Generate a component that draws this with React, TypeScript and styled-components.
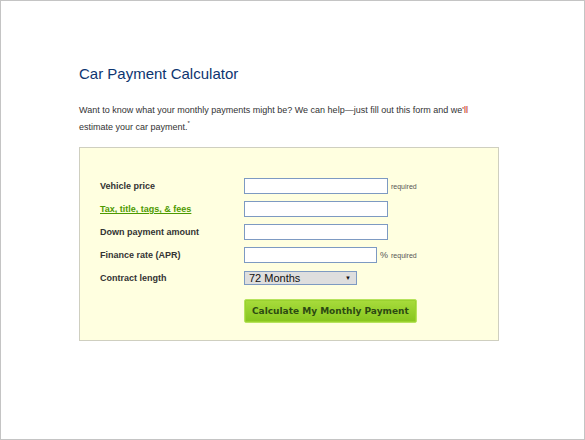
import * as React from 'react';
import styled, { createGlobalStyle } from 'styled-components';

const GlobalStyle = createGlobalStyle`
  html, body {
    margin: 0;
    padding: 0;
    background: #ffffff;
  }
  body {
    font-family: 'Liberation Sans', Arial, sans-serif;
  }
`;

const Frame = styled.div`
  box-sizing: border-box;
  width: 585px;
  height: 440px;
  border: 1px solid #c4c4c4;
  padding: 64px 86px 0 78px;
`;

const Title = styled.h1`
  margin: 0;
  font-size: 15px;
  font-weight: normal;
  color: #0d3570;
  line-height: 18px;
`;

const Intro = styled.p`
  margin: 19px 0 0;
  font-size: 9px;
  line-height: 17px;
  color: #333;
`;

const Red = styled.span`
  color: #c00000;
`;

const Sup = styled.sup`
  font-size: 6px;
  vertical-align: 5px;
  line-height: 0;
`;

const Panel = styled.div`
  margin-top: 11px;
  width: 420px;
  box-sizing: border-box;
  background: #ffffe0;
  border: 1px solid #cfcfc0;
  padding: 30px 20px 17px 20px;
`;

const Grid = styled.div`
  display: grid;
  grid-template-columns: 144px 1fr;
  row-gap: 7px;
  align-items: center;
`;

const Label = styled.label`
  font-size: 9px;
  font-weight: bold;
  color: #333;
`;

const LinkLabel = styled.a`
  font-size: 9px;
  font-weight: bold;
  color: #4d9a00;
  text-decoration: underline;
`;

const Field = styled.div`
  display: flex;
  align-items: center;
  gap: 2px;
  height: 16px;
`;

const TextInput = styled.input<{ $w: number }>`
  box-sizing: border-box;
  width: ${(p) => p.$w}px;
  height: 16px;
  border: 1px solid #7d9ac2;
  background: #fff;
  padding: 0 3px;
  margin: 0;
`;

const Note = styled.span<{ $size: number }>`
  font-size: ${(p) => p.$size}px;
  color: #555;
  margin-left: 1px;
`;

const Select = styled.div`
  box-sizing: border-box;
  width: 113px;
  height: 14px;
  border: 1px solid #7d9ac2;
  background: #dedede;
  display: flex;
  align-items: center;
  justify-content: space-between;
  padding: 0 5px 0 4px;
  font-size: 11px;
  color: #111;
`;

const Arrow = styled.span`
  font-size: 6px;
  color: #111;
`;

const ButtonRow = styled.div`
  grid-column: 2;
  margin-top: 6px;
`;

const Button = styled.button`
  height: 24px;
  padding: 0 7px;
  border: 1px solid #b6e35c;
  border-radius: 2px;
  background: linear-gradient(#a8dc3c, #86c51e);
  box-shadow: inset 0 0 0 1px #9ad22f;
  font-family: 'DejaVu Sans', Verdana, sans-serif;
  font-size: 9px;
  font-weight: bold;
  color: #2c4a12;
  cursor: pointer;
`;

export default function App() {
  return (
    <>
      <GlobalStyle />
      <Frame>
        <Title>Car Payment Calculator</Title>
        <Intro>
          Want to know what your monthly payments might be? We can help—just fill out this form and we
          <Red>'ll</Red>
          <br />
          estimate your car payment.<Sup>*</Sup>
        </Intro>
        <Panel>
          <Grid>
            <Label>Vehicle price</Label>
            <Field>
              <TextInput $w={144} />
              <Note $size={7}>required</Note>
            </Field>
            <LinkLabel href="#">Tax, title, tags, &amp; fees</LinkLabel>
            <Field>
              <TextInput $w={144} />
            </Field>
            <Label>Down payment amount</Label>
            <Field>
              <TextInput $w={144} />
            </Field>
            <Label>Finance rate (APR)</Label>
            <Field>
              <TextInput $w={133} />
              <Note $size={9}>%</Note>
              <Note $size={7}>required</Note>
            </Field>
            <Label>Contract length</Label>
            <Field>
              <Select>
                <span>72 Months</span>
                <Arrow>▼</Arrow>
              </Select>
            </Field>
            <ButtonRow>
              <Button>Calculate My Monthly Payment</Button>
            </ButtonRow>
          </Grid>
        </Panel>
      </Frame>
    </>
  );
}
